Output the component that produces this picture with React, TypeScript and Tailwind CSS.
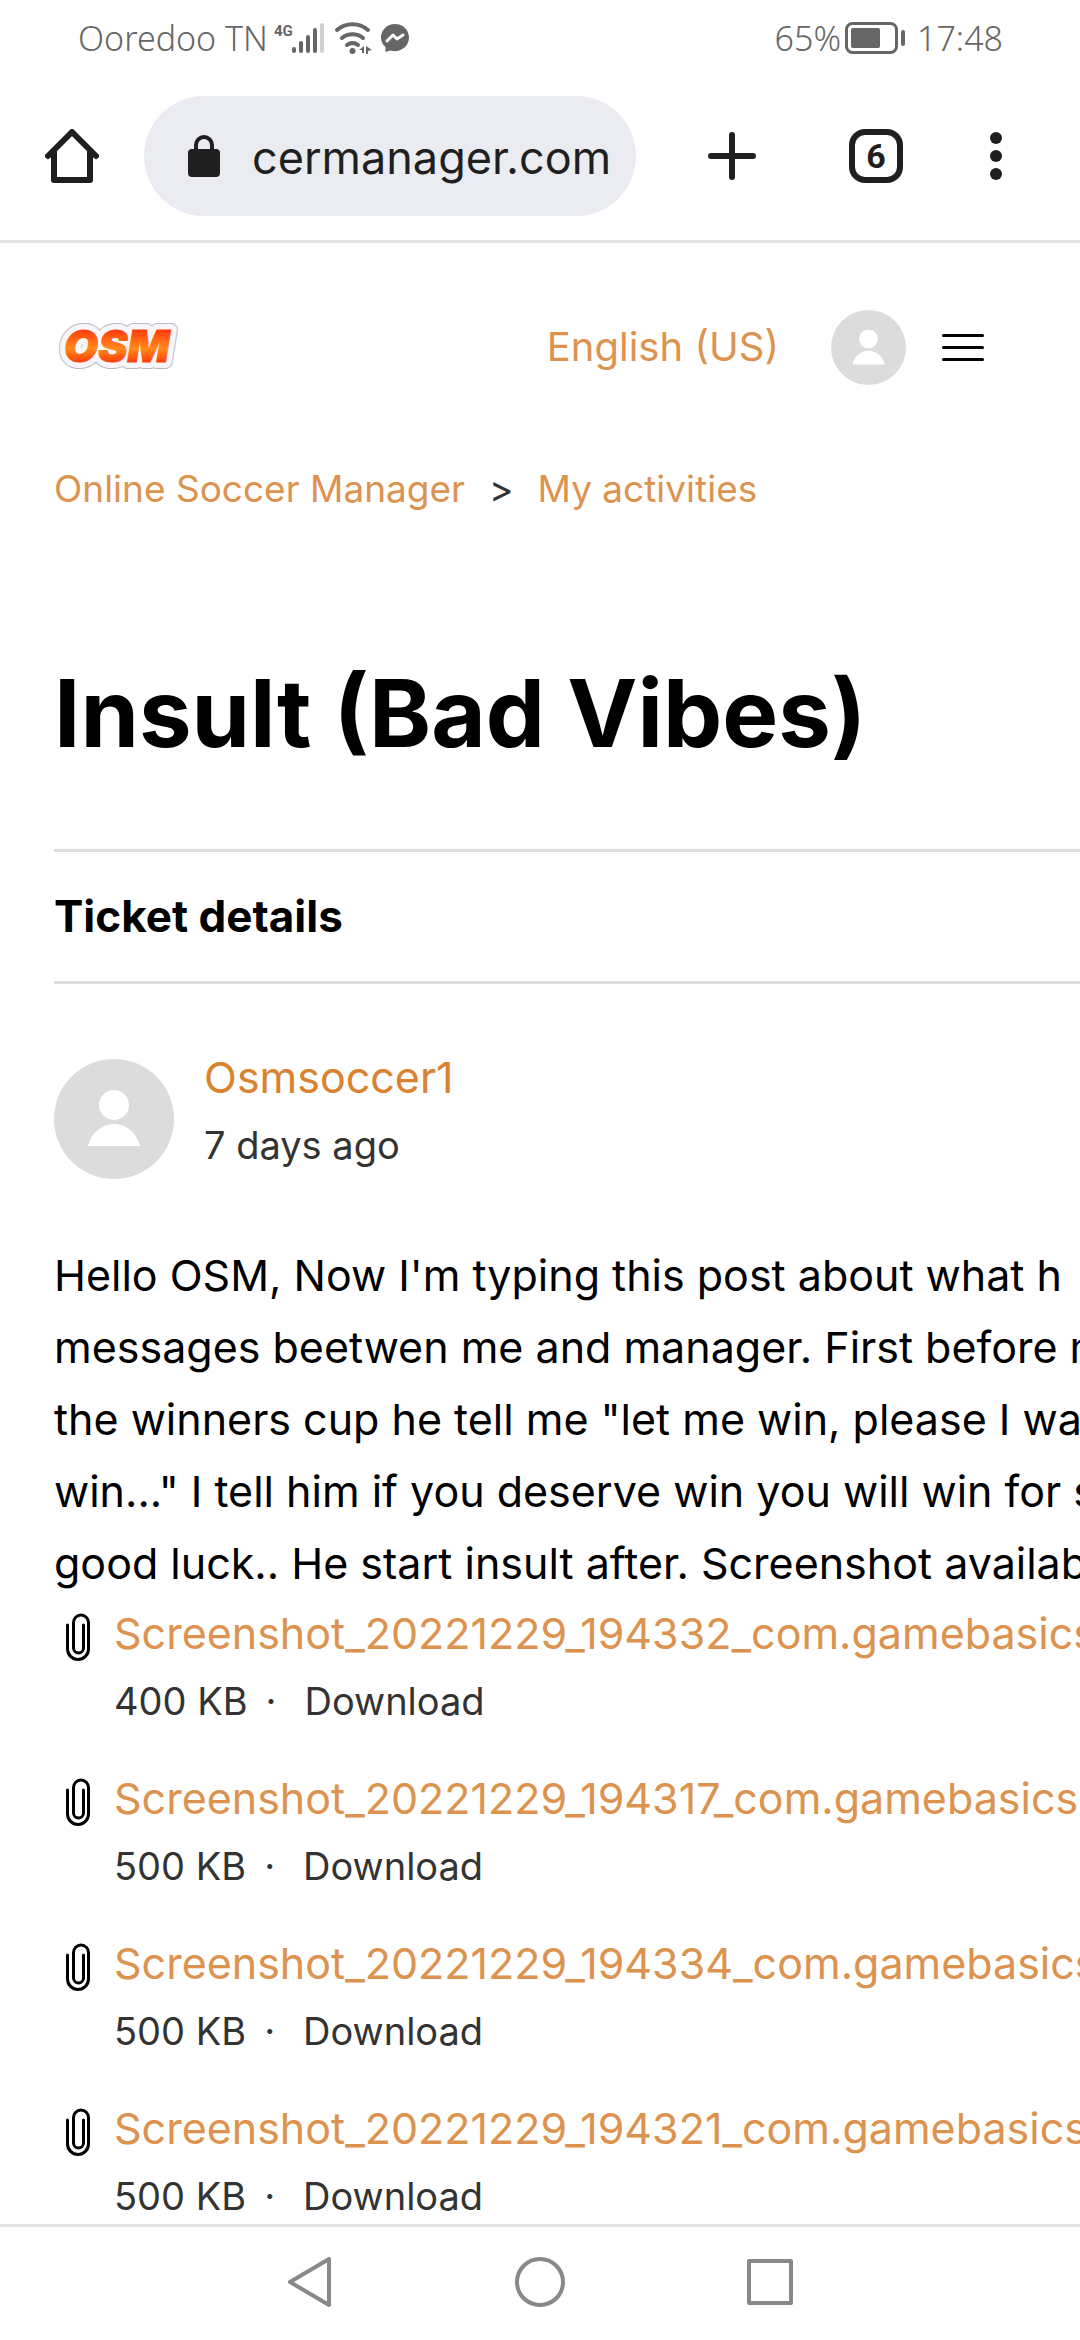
import { useState } from 'react';

const attachments = [
  { id: 1, name: 'Screenshot_20221229_194332_com.gamebasics.osm.jpg', size: '400 KB' },
  { id: 2, name: 'Screenshot_20221229_194317_com.gamebasics.osm.jpg', size: '500 KB' },
  { id: 3, name: 'Screenshot_20221229_194334_com.gamebasics.osm.jpg', size: '500 KB' },
  { id: 4, name: 'Screenshot_20221229_194321_com.gamebasics.osm.jpg', size: '500 KB' },
];

function Avatar({ className }: { className: string }) {
  return (
    <svg viewBox="0 0 120 120" className={className} aria-hidden="true">
      <circle cx="60" cy="60" r="60" fill="#dcdcdc" />
      <circle cx="60" cy="46" r="15" fill="#fff" />
      <path d="M34 87c3-13 14-22 26-22s23 9 26 22z" fill="#fff" />
    </svg>
  );
}

function PaperclipIcon() {
  return (
    <svg viewBox="0 0 24 48" className="w-6 h-12 shrink-0" fill="none" stroke="#000" strokeWidth="3" strokeLinecap="round" aria-hidden="true">
      <path d="M1.5 12v24a10.500 10.500 0 0 0 21 0V9.500a7.500 7.500 0 0 0-15 0V35a5 5 0 0 0 10 0V12" />
    </svg>
  );
}

function StatusBar() {
  return (
    <div className="flex h-[76px] shrink-0 items-center justify-between pl-[78px] pr-[77px] text-[#666]">
      <div className="flex items-center">
        <span className="font-['Noto_Sans'] text-[34px] font-light leading-none">Ooredoo TN</span>
        <svg viewBox="0 0 52 34" className="ml-1.5 h-[34px] w-[52px]" fill="currentColor" aria-hidden="true">
          <text x="0" y="15" fontFamily="Roboto, sans-serif" fontWeight="700" fontSize="15">4G</text>
          <rect x="18" y="26" width="4" height="6" rx="2" />
          <rect x="25" y="20" width="4" height="12" rx="2" />
          <rect x="32" y="14" width="4" height="18" rx="2" />
          <rect x="39" y="7" width="4" height="25" rx="2" />
          <rect x="46" y="2" width="4" height="30" rx="2" fill="#d0d0d0" />
        </svg>
        <svg viewBox="0 0 38 34" className="ml-2 h-[34px] w-[38px]" fill="none" stroke="currentColor" strokeWidth="4" strokeLinecap="round" aria-hidden="true">
          <path d="M3 9a24 24 0 0 1 31 0M8 17a17 17 0 0 1 21 0M13 24a9 9 0 0 1 11 0" />
          <circle cx="18.500" cy="30" r="3" fill="currentColor" stroke="none" />
          <path d="M25 29l5-4v7h-2v-3zM32 25l6 4-4 1v3h-2z" fill="currentColor" stroke="none" />
        </svg>
        <svg viewBox="0 0 30 30" className="ml-2 h-[30px] w-[30px]" aria-hidden="true">
          <path d="M15 1C7 1 1 7 1 14.500c0 4 1.500 7 4.500 9.500v5l4.500-1.500c10 3 19-4 19-13C29 7 23 1 15 1z" fill="currentColor" />
          <path d="M7 18l6-6 4 4 6-4" fill="none" stroke="#fff" strokeWidth="3" strokeLinecap="round" strokeLinejoin="round" />
        </svg>
      </div>
      <div className="flex items-center">
        <span className="font-['Noto_Sans'] text-[34px] font-light leading-none">65%</span>
        <svg viewBox="0 0 60 32" className="ml-1 mr-3 h-8 w-[60px]" aria-hidden="true">
          <rect x="1.500" y="1.500" width="50" height="29" rx="6" fill="none" stroke="currentColor" strokeWidth="3" />
          <rect x="6" y="6" width="29" height="20" rx="2" fill="currentColor" />
          <rect x="56" y="8" width="4" height="16" rx="2" fill="currentColor" />
        </svg>
        <span className="font-['Noto_Sans'] text-[34px] font-light leading-none">17:48</span>
      </div>
    </div>
  );
}

function BrowserBar() {
  return (
    <div className="flex h-[167px] shrink-0 items-start border-b-[3px] border-[#e1e3e1] pt-5 pl-[45px] pr-[78px] text-[#1f1f1f]">
      <button aria-label="Home" className="flex h-[120px] items-center">
        <svg viewBox="0 0 54 54" className="h-[54px] w-[54px]" fill="none" stroke="currentColor" strokeWidth="6" strokeLinecap="round" strokeLinejoin="round" aria-hidden="true">
          <path d="M3 27L27 3l24 24M9 23v28h36V23" />
        </svg>
      </button>
      <div className="ml-[45px] flex h-[120px] min-w-0 flex-1 items-center rounded-full bg-[#ebecf1] pl-11">
        <svg viewBox="0 0 32 42" className="mr-8 h-[42px] w-8 shrink-0" aria-hidden="true">
          <path d="M8 16v-6a8 8 0 0 1 16 0v6" fill="none" stroke="currentColor" strokeWidth="4" />
          <rect y="14" width="32" height="28" rx="4" fill="currentColor" />
        </svg>
        <input aria-label="Address" defaultValue="cermanager.com" className="min-w-0 flex-1 bg-transparent pt-1 text-[45px] leading-[60px] outline-none" />
      </div>
      <div className="ml-[72px] flex h-[120px] items-center">
        <button aria-label="New tab">
          <svg viewBox="0 0 48 48" className="h-12 w-12" stroke="currentColor" strokeWidth="6" strokeLinecap="round" aria-hidden="true">
            <path d="M24 3v42M3 24h42" />
          </svg>
        </button>
        <button aria-label="Tabs" className="ml-[93px] flex h-[54px] w-[54px] items-center justify-center rounded-2xl border-[6px] border-current font-['Roboto'] text-[34px] font-bold leading-none">
          6
        </button>
        <button aria-label="Menu" className="ml-[87px] flex flex-col gap-1.5">
          <span className="h-3 w-3 rounded-full bg-current" />
          <span className="h-3 w-3 rounded-full bg-current" />
          <span className="h-3 w-3 rounded-full bg-current" />
        </button>
      </div>
    </div>
  );
}

function OsmLogo() {
  const text = { x: 6, y: 40, fontFamily: 'Inter, sans-serif', fontWeight: 900, fontStyle: 'italic', fontSize: 44 };
  return (
    <svg viewBox="0 0 124 50" className="h-[50px] w-[124px]" role="img" aria-label="OSM">
      <defs>
        <linearGradient id="osm" x1="0" y1="0" x2="0" y2="1">
          <stop offset="0.200" stopColor="#ff3c0c" />
          <stop offset="0.550" stopColor="#ff8a1a" />
          <stop offset="0.850" stopColor="#ff2f06" />
        </linearGradient>
      </defs>
      <text {...text} fill="url(#osm)" stroke="#b9b9c4" strokeWidth="14" strokeLinejoin="round">OSM</text>
      <text {...text} fill="url(#osm)" stroke="#f8f6f9" strokeWidth="12" strokeLinejoin="round">OSM</text>
      <text {...text} fill="url(#osm)" stroke="url(#osm)" strokeWidth="1">OSM</text>
    </svg>
  );
}

export default function App() {
  const [menuOpen, setMenuOpen] = useState(false);

  return (
    <div className="flex h-screen flex-col overflow-hidden bg-white font-['Inter',sans-serif] text-black">
      <StatusBar />
      <BrowserBar />

      <div className="min-h-0 flex-1 overflow-hidden pl-[54px]">
        {/* Site header */}
        <header className="flex h-52 items-center justify-between pr-24">
          <a href="#home" className="ml-1">
            <OsmLogo />
          </a>
          <div className="flex items-center">
            <button className="text-[40px] leading-none text-[#dc9350]">English (US)</button>
            <a href="#profile" aria-label="Profile" className="ml-[52px]">
              <Avatar className="h-[75px] w-[75px]" />
            </a>
            <button aria-label="Toggle menu" aria-expanded={menuOpen} onClick={() => setMenuOpen(!menuOpen)} className="ml-9 flex w-[42px] flex-col gap-[9px]">
              <span className="h-[3px] w-full rounded-full bg-black" />
              <span className="h-[3px] w-full rounded-full bg-black" />
              <span className="h-[3px] w-full rounded-full bg-black" />
            </button>
          </div>
        </header>

        {/* Breadcrumbs */}
        <nav className="mt-2 flex h-[60px] items-center text-[37px] text-[#dc9350]">
          <a href="#help">Online Soccer Manager</a>
          <span className="mx-6 text-[#333]">&gt;</span>
          <a href="#activities">My activities</a>
        </nav>

        <h1 className="mt-[122px] text-[94px] font-bold leading-[144px]">Insult (Bad Vibes)</h1>

        <h2 className="mt-16 border-y-[3px] border-[#ddd] text-[44px] font-bold leading-[129px]">Ticket details</h2>

        {/* Comment */}
        <div className="mt-[75px] flex h-[120px] items-end">
          <Avatar className="h-[120px] w-[120px]" />
          <div className="ml-[30px]">
            <a href="#user" className="block text-[43px] leading-[68px] text-[#d9822f]">Osmsoccer1</a>
            <p className="text-[38px] leading-[68px] text-[#333]">7 days ago</p>
          </div>
        </div>

        <p className="mt-[60px] whitespace-nowrap text-[43px] leading-[72px]">
          Hello OSM, Now I'm typing this post about what h<br />
          messages beetwen me and manager. First before match<br />
          the winners cup he tell me "let me win, please I want to<br />
          win..." I tell him if you deserve win you will win for sure<br />
          good luck.. He start insult after. Screenshot available
        </p>

        <ul>
          {attachments.map((file) => (
            <li key={file.id} className="mb-[29px] flex h-[136px] items-start pl-3">
              <div className="pt-3.5">
                <PaperclipIcon />
              </div>
              <div className="ml-6 whitespace-nowrap">
                <a href={`#file-${file.id}`} className="block text-[43px] leading-[68px] text-[#dc9350]">{file.name}</a>
                <div className="flex text-[38px] leading-[68px] text-[#333]">
                  <span>{file.size}</span>
                  <span className="mx-[18px]">·</span>
                  <a href={`#download-${file.id}`} className="ml-2.5">Download</a>
                </div>
              </div>
            </li>
          ))}
        </ul>
      </div>

      {/* System navigation */}
      <div className="flex h-[116px] shrink-0 items-center justify-center gap-[180px] border-t-[3px] border-[#e0e0e0] pb-1 text-[#888]">
        <button aria-label="Back">
          <svg viewBox="0 0 50 50" className="h-[50px] w-[50px]" fill="none" stroke="currentColor" strokeWidth="4" strokeLinejoin="round" aria-hidden="true">
            <path d="M44 2v46L5 25z" />
          </svg>
        </button>
        <button aria-label="Home screen">
          <svg viewBox="0 0 50 50" className="h-[50px] w-[50px]" fill="none" stroke="currentColor" strokeWidth="4" aria-hidden="true">
            <circle cx="25" cy="25" r="23" />
          </svg>
        </button>
        <button aria-label="Recent apps">
          <svg viewBox="0 0 50 50" className="h-[50px] w-[50px]" fill="none" stroke="currentColor" strokeWidth="4" strokeLinejoin="round" aria-hidden="true">
            <rect x="4" y="4" width="42" height="42" />
          </svg>
        </button>
      </div>
    </div>
  );
}
